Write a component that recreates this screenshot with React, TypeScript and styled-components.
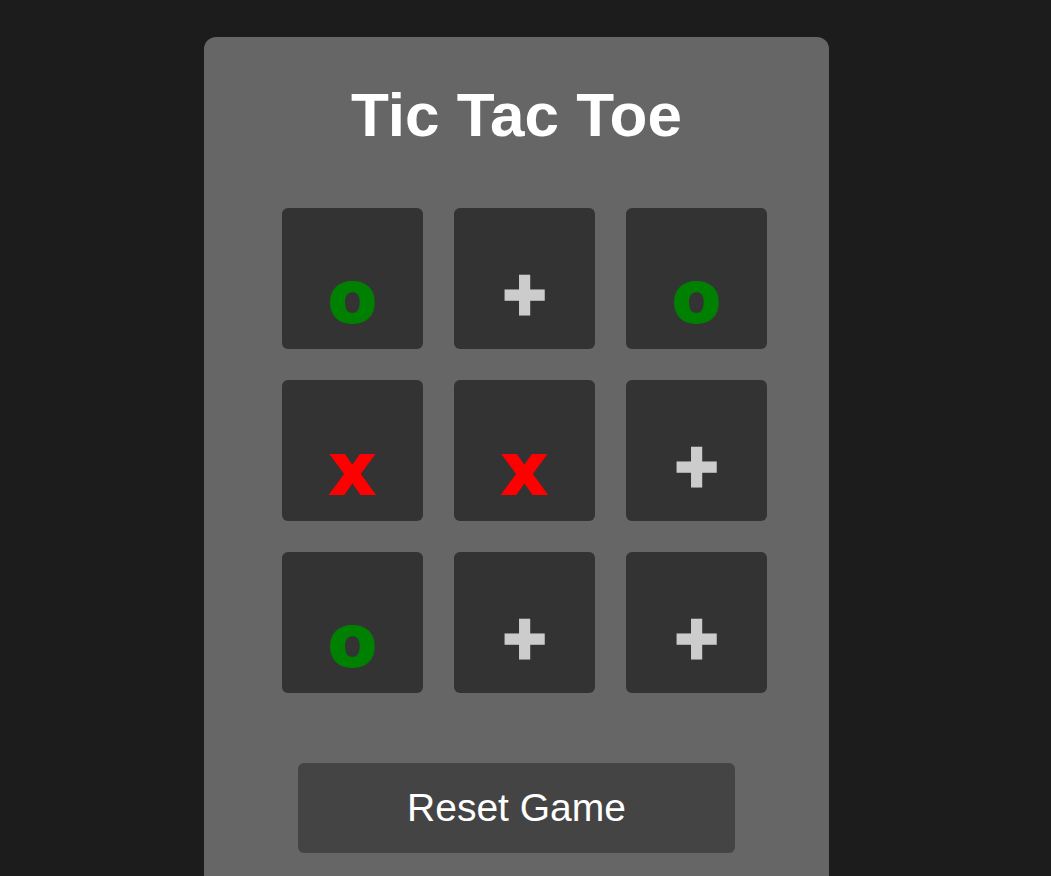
import React, { useState } from 'react'
import styled, { createGlobalStyle } from 'styled-components'

type Mark = 'x' | 'o' | null

const GlobalStyle = createGlobalStyle`
  html, body {
    margin: 0;
    padding: 0;
    background: #1c1c1c;
    overflow: hidden;
  }
  body {
    font-family: "Liberation Sans", Arial, sans-serif;
  }
`

const Page = styled.div`
  display: flex;
  justify-content: center;
  padding: 37px 18px 0 0;
  min-height: 100vh;
  box-sizing: border-box;
`

const Card = styled.div`
  width: 625px;
  background: #666666;
  border-radius: 12px;
  padding: 42px 0 40px;
  display: flex;
  flex-direction: column;
  align-items: center;
`

const Title = styled.h1`
  margin: 0;
  color: #ffffff;
  font-size: 62px;
  font-weight: bold;
  line-height: normal;
`

const Board = styled.div`
  margin: 58px 0 0 16px;
  display: grid;
  grid-template-columns: repeat(3, 141px);
  grid-auto-rows: 141px;
  gap: 31px;
`

const Cell = styled.button`
  all: unset;
  box-sizing: border-box;
  background: #333333;
  border-radius: 6px;
  display: flex;
  align-items: flex-end;
  justify-content: center;
  cursor: pointer;
`

const Symbol = styled.span<{ $kind: 'x' | 'o' | 'empty' }>`
  display: block;
  line-height: 1;
  font-weight: bold;
  ${({ $kind }) =>
    $kind === 'empty'
      ? `
    font-family: "Liberation Sans", Arial, sans-serif;
    font-size: 74px;
    color: #cccccc;
    -webkit-text-stroke: 3px #cccccc;
    padding-bottom: 17px;
  `
      : `
    font-family: "DejaVu Sans", sans-serif;
    font-size: 71px;
    color: ${$kind === 'x' ? '#ff0000' : '#008000'};
    -webkit-text-stroke: 2px ${$kind === 'x' ? '#ff0000' : '#008000'};
    padding-bottom: 16px;
  `}
`

const ResetButton = styled.button`
  margin-top: 70px;
  width: 437px;
  height: 90px;
  border: none;
  border-radius: 6px;
  background: #444444;
  color: #ffffff;
  font-family: "Liberation Sans", Arial, sans-serif;
  font-size: 39px;
  cursor: pointer;
`

const start: Mark[] = ['o', null, 'o', 'x', 'x', null, 'o', null, null]

export default function App() {
  const [cells, setCells] = useState<Mark[]>(start)
  const [turn, setTurn] = useState<'x' | 'o'>('x')

  const play = (i: number) => {
    if (cells[i]) return
    const next = [...cells]
    next[i] = turn
    setCells(next)
    setTurn(turn === 'x' ? 'o' : 'x')
  }

  return (
    <>
      <GlobalStyle />
      <Page>
        <Card>
          <Title>Tic Tac Toe</Title>
          <Board>
            {cells.map((c, i) => (
              <Cell key={i} onClick={() => play(i)}>
                <Symbol $kind={c ?? 'empty'}>{c ?? '+'}</Symbol>
              </Cell>
            ))}
          </Board>
          <ResetButton onClick={() => setCells(Array(9).fill(null))}>Reset Game</ResetButton>
        </Card>
      </Page>
    </>
  )
}
